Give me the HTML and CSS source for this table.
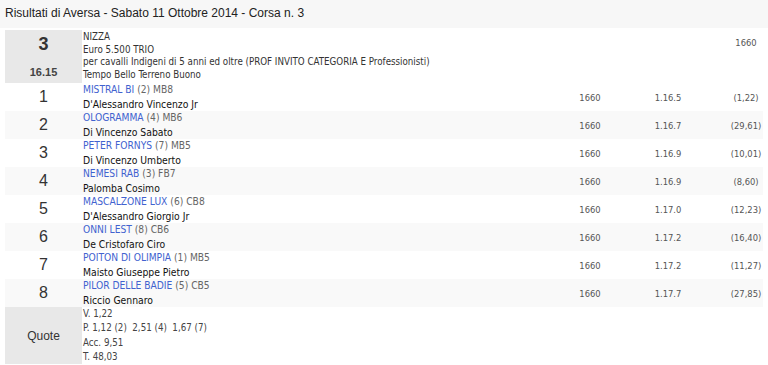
FILE: index.html
```html
<!DOCTYPE html>
<html lang="it">
<head>
<meta charset="utf-8">
<title>Risultati di Aversa</title>
<link rel="stylesheet" href="styles.css">
</head>
<body>
<div class="title">Risultati di Aversa - Sabato 11 Ottobre 2014 - Corsa n. 3</div>
<table class="res">
  <colgroup>
    <col class="c-num"><col class="c-info"><col class="c-dist"><col class="c-time"><col class="c-quota">
  </colgroup>
  <tr class="race">
    <td class="racenum"><div class="big">3</div><div class="hour">16.15</div></td>
    <td class="info">
      <div>NIZZA</div>
      <div>Euro 5.500 TRIO</div>
      <div>per cavalli Indigeni di 5 anni ed oltre (PROF INVITO CATEGORIA E Professionisti)</div>
      <div>Tempo Bello Terreno Buono</div>
    </td>
    <td></td><td></td>
    <td class="val q top">1660</td>
  </tr>
  <tr class="horse">
    <td class="pos">1</td>
    <td class="hinfo"><div><span class="name">MISTRAL BI</span> <span class="extra">(2) MB8</span></div><div class="jockey">D'Alessandro Vincenzo Jr</div></td>
    <td class="val">1660</td><td class="val">1.16.5</td><td class="val q">(1,22)</td>
  </tr>
  <tr class="horse">
    <td class="pos">2</td>
    <td class="hinfo"><div><span class="name">OLOGRAMMA</span> <span class="extra">(4) MB6</span></div><div class="jockey">Di Vincenzo Sabato</div></td>
    <td class="val">1660</td><td class="val">1.16.7</td><td class="val q">(29,61)</td>
  </tr>
  <tr class="horse">
    <td class="pos">3</td>
    <td class="hinfo"><div><span class="name">PETER FORNYS</span> <span class="extra">(7) MB5</span></div><div class="jockey">Di Vincenzo Umberto</div></td>
    <td class="val">1660</td><td class="val">1.16.9</td><td class="val q">(10,01)</td>
  </tr>
  <tr class="horse">
    <td class="pos">4</td>
    <td class="hinfo"><div><span class="name">NEMESI RAB</span> <span class="extra">(3) FB7</span></div><div class="jockey">Palomba Cosimo</div></td>
    <td class="val">1660</td><td class="val">1.16.9</td><td class="val q">(8,60)</td>
  </tr>
  <tr class="horse">
    <td class="pos">5</td>
    <td class="hinfo"><div><span class="name">MASCALZONE LUX</span> <span class="extra">(6) CB8</span></div><div class="jockey">D'Alessandro Giorgio Jr</div></td>
    <td class="val">1660</td><td class="val">1.17.0</td><td class="val q">(12,23)</td>
  </tr>
  <tr class="horse">
    <td class="pos">6</td>
    <td class="hinfo"><div><span class="name">ONNI LEST</span> <span class="extra">(8) CB6</span></div><div class="jockey">De Cristofaro Ciro</div></td>
    <td class="val">1660</td><td class="val">1.17.2</td><td class="val q">(16,40)</td>
  </tr>
  <tr class="horse">
    <td class="pos">7</td>
    <td class="hinfo"><div><span class="name">POITON DI OLIMPIA</span> <span class="extra">(1) MB5</span></div><div class="jockey">Maisto Giuseppe Pietro</div></td>
    <td class="val">1660</td><td class="val">1.17.2</td><td class="val q">(11,27)</td>
  </tr>
  <tr class="horse">
    <td class="pos">8</td>
    <td class="hinfo"><div><span class="name">PILOR DELLE BADIE</span> <span class="extra">(5) CB5</span></div><div class="jockey">Riccio Gennaro</div></td>
    <td class="val">1660</td><td class="val">1.17.7</td><td class="val q">(27,85)</td>
  </tr>
  <tr class="quote">
    <td class="qlabel">Quote</td>
    <td class="qinfo">
      <div>V. 1,22</div>
      <div>P. 1,12 (2)&nbsp; 2,51 (4)&nbsp; 1,67 (7)</div>
      <div>Acc. 9,51</div>
      <div>T. 48,03</div>
    </td>
    <td></td><td></td><td></td>
  </tr>
</table>
</body>
</html>
```

FILE: styles.css
```css
html, body {
  margin: 0;
  padding: 0;
  background: #fff;
  font-family: "DejaVu Sans Condensed", "Liberation Sans", sans-serif;
  color: #333;
}
.title {
  background: #f7f7f7;
  height: 28px;
  line-height: 27px;
  padding-left: 5px;
  font-family: "Liberation Sans", Arial, sans-serif;
  font-size: 12px;
  color: #222;
}
.res {
  border-collapse: collapse;
  margin: 2px 5px 0 5px;
  width: 758px;
  table-layout: fixed;
}
.c-num { width: 77px; }
.c-info { width: 473px; }
.c-dist { width: 70px; }
.c-time { width: 86px; }
.c-quota { width: 52px; }
.res td {
  padding: 0;
  vertical-align: top;
}
.racenum {
  background: #e8e8e8;
  text-align: center;
  height: 53px;
  font-family: "Liberation Sans", Arial, sans-serif;
}
.racenum .big {
  font-size: 18px;
  font-weight: bold;
  line-height: 22px;
  padding-top: 3px;
  color: #333;
}
.racenum .hour {
  font-size: 11px;
  font-weight: bold;
  line-height: 14px;
  padding-top: 10px;
  color: #444;
}
.res td.info,
.res td.hinfo,
.res td.qinfo {
  padding-left: 1px;
}
.info {
  font-size: 9.7px;
  line-height: 12.7px;
  color: #333;
  padding-top: 1px !important;
}
.val {
  font-size: 9.3px;
  color: #555;
  text-align: center;
  vertical-align: middle !important;
}
.val.q {
  padding-left: 18px !important;
}
.val.top {
  vertical-align: top !important;
  padding-top: 7px !important;
}
.horse td {
  height: 28px;
}
.horse:nth-child(odd) td {
  background: #f9f9f9;
}
.pos {
  text-align: center;
  font-family: "Liberation Sans", Arial, sans-serif;
  font-size: 16px;
  color: #333;
  vertical-align: middle !important;
}
.hinfo {
  line-height: 14px;
  font-size: 10.2px;
}
.name {
  color: #4162cf;
}
.extra {
  color: #666;
}
.jockey {
  font-size: 10.3px;
  color: #111;
}
.qlabel {
  background: #e8e8e8;
  text-align: center;
  vertical-align: middle !important;
  font-family: "Liberation Sans", Arial, sans-serif;
  font-size: 12px;
  color: #333;
  height: 56px;
}
.qinfo {
  font-size: 9.7px;
  line-height: 14.3px;
  color: #444;
  padding-top: 0;
}
```
